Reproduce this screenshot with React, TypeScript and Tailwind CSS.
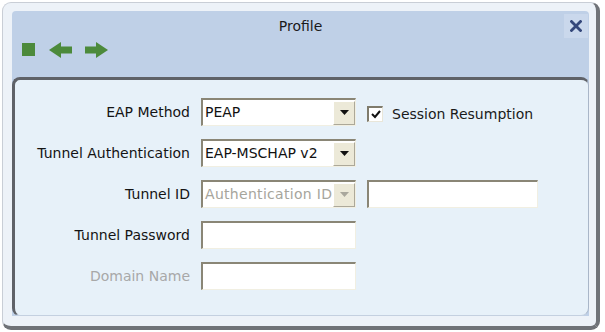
import React from 'react';

const font = { fontFamily: '"DejaVu Sans", Verdana, sans-serif' };

const Arrow = ({ dir }: { dir: 'left' | 'right' }) => (
  <svg width="23" height="16" viewBox="0 0 23 16" className={dir === 'right' ? '' : '-scale-x-100'}>
    <polygon points="0,4.5 11,4.5 11,0 23,8 11,16 11,11.5 0,11.5" fill="#4c8a3b" />
  </svg>
);

const DropButton = ({ disabled = false }: { disabled?: boolean }) => (
  <div className="w-[22px] h-[24px] bg-[#ece9d8] border-t border-l border-t-white border-l-white border-r border-b border-r-[#aca899] border-b-[#aca899] flex items-center justify-center">
    <svg width="9" height="5" viewBox="0 0 9 5">
      <polygon points="0,0 9,0 4.5,5" fill={disabled ? '#a9a79c' : '#111'} />
    </svg>
  </div>
);

const Select = ({ value, disabled = false }: { value: string; disabled?: boolean }) => (
  <div className="w-[155px] h-[28px] bg-white border-t-2 border-l-2 border-[#8a8676] border-r border-b border-r-[#f1efe2] border-b-[#f1efe2] flex items-center overflow-hidden">
    <span className={`flex-1 pl-[2px] whitespace-nowrap overflow-hidden text-[14px] ${disabled ? 'text-[#a6a59c] tracking-[0.3px]' : 'text-[#111]'}`}>
      {value}
    </span>
    <DropButton disabled={disabled} />
  </div>
);

const TextBox = ({ w = 'w-[155px]' }: { w?: string }) => (
  <div className={`${w} h-[28px] bg-white border-t-2 border-l-2 border-[#8a8676] border-r border-b border-r-[#f1efe2] border-b-[#f1efe2]`} />
);

const Label = ({ children, dim = false }: { children: React.ReactNode; dim?: boolean }) => (
  <div className={`text-right text-[14px] whitespace-nowrap ${dim ? 'text-[#a8a8a8]' : 'text-[#141414]'}`}>{children}</div>
);

export default function App() {
  return (
    <div className="w-[605px] h-[332px] bg-white pl-[2px] pt-[2px]" style={font}>
      <div className="w-[598px] h-[328px] rounded-[9px] bg-[#edf2f8] border border-[#c9ced6] border-r-[4px] border-r-[#707378] border-b-[4px] border-b-[#6f7277] pl-[9px] pt-[8px] pr-[7px] pb-[10px] flex">
        <div className="flex-1 flex flex-col bg-[#bfd0e7] rounded-t-[4px]">
          {/* title */}
          <div className="h-[27px] grid grid-cols-[1fr_auto_1fr] items-center">
            <div />
            <div className="text-[14px] text-[#1a1a1a] pt-[3px]">Profile</div>
            <div className="flex justify-end pr-[1px] self-stretch items-end">
              <div className="w-[24px] h-[24px] bg-[#cad8ec] flex items-center justify-center">
                <svg width="12" height="12" viewBox="0 0 12 12">
                  <path d="M1.5 1.5 L10.5 10.5 M10.5 1.5 L1.5 10.5" stroke="#34477a" strokeWidth="2.8" strokeLinecap="square" />
                </svg>
              </div>
            </div>
          </div>
          {/* toolbar */}
          <div className="h-[39px] flex items-start pt-[4px] pl-[10px]">
            <div className="w-[13px] h-[13px] mt-[1px] bg-[#4c8a3b]" />
            <div className="ml-[14px]"><Arrow dir="left" /></div>
            <div className="ml-[13px]"><Arrow dir="right" /></div>
          </div>
          {/* panel */}
          <div className="flex-1 rounded-[8px] bg-[#e7f1f9] border-l-[3px] border-t-[3px] border-[#5f6268] border-r border-r-[#a9b6c8] border-b border-b-[#c4d0e0] pt-[18px]">
            <div className="grid grid-cols-[175px_155px_auto] gap-x-[11px] gap-y-[13px] items-center">
              <Label>EAP Method</Label>
              <Select value="PEAP" />
              <div className="flex items-center gap-[9px] pt-[4px]">
                <div className="w-[16px] h-[16px] bg-white border-t-2 border-l-2 border-[#7f7b6c] border-r border-b border-r-[#e9e6d9] border-b-[#e9e6d9] flex items-center justify-center">
                  <svg width="10" height="9" viewBox="0 0 10 9">
                    <polyline points="1,4 4,7 9,1" fill="none" stroke="#111" strokeWidth="2" />
                  </svg>
                </div>
                <span className="text-[14px] text-[#1a1a1a]">Session Resumption</span>
              </div>

              <Label>Tunnel Authentication</Label>
              <Select value="EAP-MSCHAP v2" />
              <div />

              <Label>Tunnel ID</Label>
              <Select value="Authentication ID" disabled />
              <TextBox w="w-[171px]" />

              <Label>Tunnel Password</Label>
              <TextBox />
              <div />

              <Label dim>Domain Name</Label>
              <TextBox />
              <div />
            </div>
          </div>
        </div>
      </div>
    </div>
  );
}
